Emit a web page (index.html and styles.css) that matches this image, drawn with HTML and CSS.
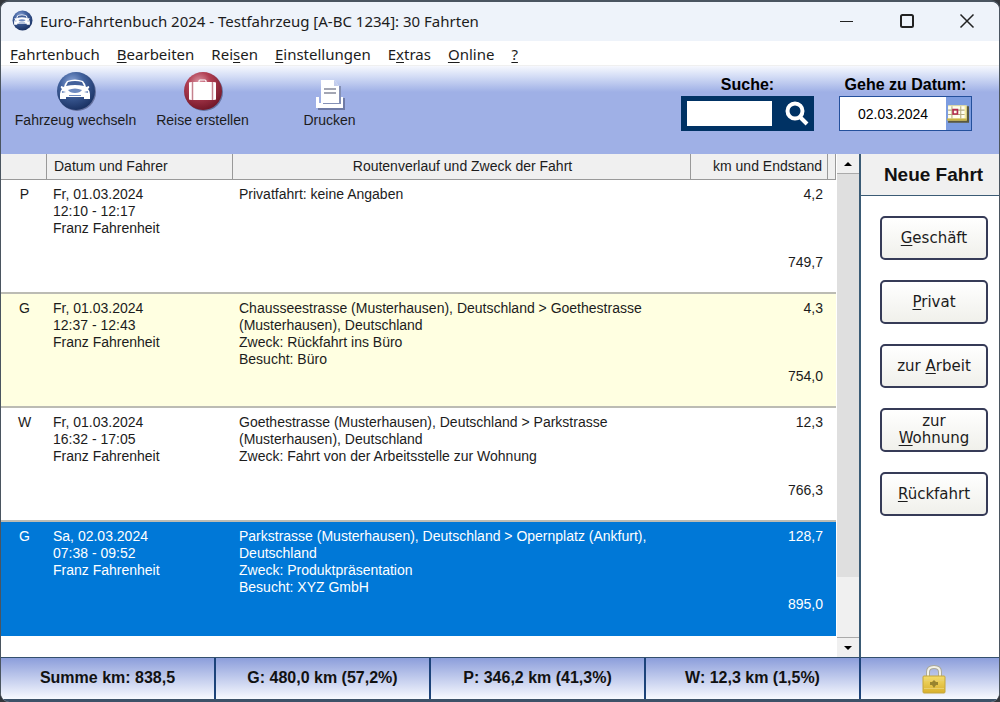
FILE: index.html
```html
<!DOCTYPE html>
<html lang="de">
<head>
<meta charset="utf-8">
<meta name="viewport" content="width=device-width, initial-scale=1">
<title>Euro-Fahrtenbuch 2024</title>
<link rel="stylesheet" href="styles.css">
</head>
<body>
<div class="window">
  <header class="titlebar">
    <svg class="app-icon" viewBox="0 0 40 40" aria-hidden="true">
      <defs>
        <radialGradient id="blue" cx="40%" cy="28%" r="75%"><stop offset="0" stop-color="#8fa9dc"/><stop offset=".4" stop-color="#43639f"/><stop offset="1" stop-color="#182f60"/></radialGradient>
        <radialGradient id="red" cx="40%" cy="28%" r="75%"><stop offset="0" stop-color="#dc9aa8"/><stop offset=".4" stop-color="#b03e52"/><stop offset="1" stop-color="#701526"/></radialGradient>
        <symbol id="car" viewBox="0 0 40 40">
          <path fill="#fff" d="M11 10q8-3 16 0 2 2 3 6l3-1q1 2-1 3 2 2 2 5v5h-6v-2H10v2H4v-5q0-3 2-5-2-1-1-3l3 1q1-4 3-6z"/>
          <path fill="#43619b" d="M12 11q7-2 14 0l2 4q-9-2-18 0z"/>
          <path fill="#6f8bc0" d="M12 19q7-3 14 0-2 3-7 3t-7-3zM6 20l4 1-4 1zM32 20l-4 1 4 1zM13 24h12v1H13z"/>
        </symbol>
      </defs>
      <circle cx="20" cy="20" r="19" fill="url(#blue)"/>
      <use href="#car" width="40" height="40"/>
    </svg>
    <h1 class="title">Euro-Fahrtenbuch 2024 - Testfahrzeug [A-BC 1234]: 30 Fahrten</h1>
    <div class="window-buttons">
      <button type="button" aria-label="Minimieren"><svg viewBox="0 0 16 16"><path d="M1 8.500h13"/></svg></button>
      <button type="button" aria-label="Maximieren"><svg viewBox="0 0 16 16"><rect class="thick" x="2" y="2" width="12" height="12" rx="1.500"/></svg></button>
      <button type="button" aria-label="Schließen"><svg viewBox="0 0 16 16"><path class="cross" d="M1.500 1.500l13 13M14.500 1.500l-13 13"/></svg></button>
    </div>
  </header>

  <nav class="menubar">
    <a href="#"><u>F</u>ahrtenbuch</a>
    <a href="#"><u>B</u>earbeiten</a>
    <a href="#">Rei<u>s</u>en</a>
    <a href="#"><u>E</u>instellungen</a>
    <a href="#">E<u>x</u>tras</a>
    <a href="#"><u>O</u>nline</a>
    <a href="#"><u>?</u></a>
  </nav>

  <div class="toolbar">
    <div class="tools">
      <button class="tool" type="button">
        <svg viewBox="0 0 40 40"><circle cx="21" cy="21" r="19" fill="#4c557f" opacity=".7"/><circle cx="20" cy="20" r="19" fill="url(#blue)"/><use href="#car" width="40" height="40"/></svg>
        Fahrzeug wechseln
      </button>
      <button class="tool" type="button">
        <svg viewBox="0 0 40 40"><circle cx="21" cy="21" r="19" fill="#4c557f" opacity=".7"/><circle cx="20" cy="20" r="19" fill="url(#red)"/><path fill="none" stroke="#fff" stroke-width="1.200" d="M16 11v-1q0-1 1-1h5q1 0 1 1v1"/><path fill="#f3dfe3" d="M7 11h25q1 0 1 1v16q0 1-1 1H7q-1 0-1-1V12q0-1 1-1z"/><path fill="#fff" d="M6 12h2v16H6zM11 11h17v18H11zM31 12h2v16h-2z"/><path stroke="#b86a78" stroke-width=".8" d="M9.500 11v18M29.500 11v18"/></svg>
        Reise erstellen
      </button>
      <button class="tool" type="button">
        <svg viewBox="0 0 40 40"><path fill="#6f7ba6" d="M8 27h27v12H8z"/><path fill="#fff" d="M6 26h27v11H6z"/><path fill="#9daee4" d="M9 26h21v6H9z"/><path fill="#8490b5" d="M29 15h2v18H13v-2z"/><path fill="#fff" d="M11 9h13l5 6v17H11z"/><path fill="#c3cdec" d="M24 9v6h5z"/><path stroke="#85899a" stroke-width="1.300" d="M14 18h12M14 22h12"/><path fill="#fff" d="M6 33h27v4H6z"/></svg>
        Drucken
      </button>
    </div>
    <div class="field search">
      <label for="suche">Suche:</label>
      <div class="search-box">
        <input id="suche" type="text">
        <button type="button" aria-label="Suchen"><svg viewBox="0 0 26 26"><circle cx="11" cy="10" r="7.500"/><path d="M16 16l7 7"/></svg></button>
      </div>
    </div>
    <div class="field date">
      <label for="datum">Gehe zu Datum:</label>
      <div class="date-box">
        <input id="datum" type="text" value="02.03.2024">
        <button type="button" aria-label="Kalender"><svg viewBox="0 0 20 18"><path fill="#59583f" d="M2 2h18v15H1v-2h1z"/><path fill="#f4e99b" d="M1 1h17v14H1z"/><path fill="#fffef0" d="M1 2h15v11H1z"/><path fill="#c9b348" d="M0 13h18v2H0z"/><path stroke="#b8ae83" fill="none" d="M4.500 2v11M12.500 2v11M1 5.500h15M1 9.500h15"/><path stroke="#b42b50" stroke-width="1.500" fill="none" d="M5.500 5h4v4h-4z"/></svg></button>
      </div>
    </div>
  </div>

  <main class="main">
    <div class="list">
      <table class="trips">
        <colgroup><col class="c-type"><col class="c-date"><col><col class="c-km"><col class="c-end"></colgroup>
        <thead>
          <tr><th></th><th>Datum und Fahrer</th><th class="center">Routenverlauf und Zweck der Fahrt</th><th class="num">km und Endstand</th><th></th></tr>
        </thead>
        <tbody>
          <tr>
            <td class="type">P</td>
            <td>Fr, 01.03.2024<br>12:10 - 12:17<br>Franz Fahrenheit</td>
            <td>Privatfahrt: keine Angaben</td>
            <td class="num">4,2<div class="total">749,7</div></td><td></td>
          </tr>
          <tr class="business">
            <td class="type">G</td>
            <td>Fr, 01.03.2024<br>12:37 - 12:43<br>Franz Fahrenheit</td>
            <td>Chausseestrasse (Musterhausen), Deutschland &gt; Goethestrasse<br>(Musterhausen), Deutschland<br>Zweck: Rückfahrt ins Büro<br>Besucht: Büro</td>
            <td class="num">4,3<div class="total">754,0</div></td><td></td>
          </tr>
          <tr>
            <td class="type">W</td>
            <td>Fr, 01.03.2024<br>16:32 - 17:05<br>Franz Fahrenheit</td>
            <td>Goethestrasse (Musterhausen), Deutschland &gt; Parkstrasse<br>(Musterhausen), Deutschland<br>Zweck: Fahrt von der Arbeitsstelle zur Wohnung</td>
            <td class="num">12,3<div class="total">766,3</div></td><td></td>
          </tr>
          <tr class="selected">
            <td class="type">G</td>
            <td>Sa, 02.03.2024<br>07:38 - 09:52<br>Franz Fahrenheit</td>
            <td>Parkstrasse (Musterhausen), Deutschland &gt; Opernplatz (Ankfurt),<br>Deutschland<br>Zweck: Produktpräsentation<br>Besucht: XYZ GmbH</td>
            <td class="num">128,7<div class="total">895,0</div></td><td></td>
          </tr>
        </tbody>
      </table>
    </div>
    <div class="scrollbar">
      <button type="button" aria-label="Nach oben"><svg viewBox="0 0 10 6"><path d="M1 5l4-4 4 4z"/></svg></button>
      <div class="track"><div class="thumb"></div></div>
      <button type="button" aria-label="Nach unten"><svg viewBox="0 0 10 6"><path d="M1 1l4 4 4-4z"/></svg></button>
    </div>
    <aside class="side">
      <h2>Neue Fahrt</h2>
      <div class="actions">
        <button type="button"><span><u>G</u>eschäft</span></button>
        <button type="button"><span><u>P</u>rivat</span></button>
        <button type="button"><span>zur <u>A</u>rbeit</span></button>
        <button type="button"><span>zur<br><u>W</u>ohnung</span></button>
        <button type="button"><span><u>R</u>ückfahrt</span></button>
      </div>
    </aside>
  </main>

  <footer class="status">
    <div class="sums">
      <div>Summe km: 838,5</div>
      <div>G: 480,0 km (57,2%)</div>
      <div>P: 346,2 km (41,3%)</div>
      <div>W: 12,3 km (1,5%)</div>
    </div>
    <div class="lock">
      <svg viewBox="0 0 24 30" role="img" aria-label="Gesperrt"><defs><linearGradient id="gold" x2="0" y2="1"><stop offset="0" stop-color="#f3dc6c"/><stop offset="1" stop-color="#d9b02c"/></linearGradient></defs><path fill="none" stroke="#aaa99a" stroke-width="4" d="M6 13V8q0-5 6-5t6 5v5"/><path fill="none" stroke="#f4f3e8" stroke-width="2" d="M6 13V8q0-5 6-5t6 5v5"/><rect x="1" y="12" width="22" height="17" rx="1" fill="url(#gold)" stroke="#c4a63c"/><path fill="none" stroke="#ead06a" d="M2 16.500h20M2 24.500h20"/><path fill="#98842f" d="M12 16l2 2h2v3h-2l-2 3-2-3H8v-3h2z"/></svg>
    </div>
  </footer>
</div>
</body>
</html>
```
FILE: styles.css
```css
* { box-sizing: border-box; }

body {
  margin: 0;
  background: #33373c;
  color: #1c1c1c;
  font: 14px/17px "Liberation Sans", Arial, sans-serif;
}

button, input { font: inherit; color: inherit; }
button { margin: 0; padding: 0; border: 0; background: none; }
svg { display: block; }

.window {
  display: flex;
  flex-direction: column;
  min-height: 100vh;
  border: 1px solid #4a5560;
  border-top-width: 2px;
  border-bottom: 0;
  border-radius: 9px;
  overflow: hidden;
  background: #fff;
}

.titlebar {
  display: flex;
  align-items: center;
  height: 39px;
  padding: 0 2px 2px 11px;
  background: #eef3fa;
}
.app-icon { width: 21px; height: 21px; }
.title {
  flex: 1;
  margin: 0 0 0 7px;
  font: 15px/20px "Noto Sans", sans-serif;
}
.window-buttons { display: flex; }
.window-buttons button { width: 60px; height: 36px; }
.window-buttons svg {
  width: 16px;
  height: 16px;
  margin: 0 auto;
  fill: none;
  stroke: #222;
}
.window-buttons .thick { stroke-width: 2; }
.window-buttons .cross { stroke-width: 1.5; }

.menubar {
  display: flex;
  gap: 17px;
  height: 25px;
  padding-left: 9px;
  border-bottom: 1px solid #f0f0f0;
  font: 15px/26px "Noto Sans", sans-serif;
}
.menubar a { color: inherit; text-decoration: none; }
u { text-underline-offset: 2px; }

.toolbar {
  display: flex;
  height: 88px;
  padding-right: 27px;
  background: linear-gradient(#f6f8fe, #d5def6 10px, #9fb0e6 26px);
}
.tools {
  display: flex;
  flex: 1;
  align-items: flex-start;
  padding: 5px 0 0 11px;
}
.tool {
  display: flex;
  flex-direction: column;
  align-items: center;
  gap: 1px;
  width: 127px;
  white-space: nowrap;
}
.tool svg { width: 40px; height: 40px; }
.field {
  display: flex;
  flex-direction: column;
  align-items: center;
  padding-top: 10px;
  color: #000;
}
.field label { margin-bottom: 3px; font-size: 16px; font-weight: bold; }
.search { width: 133px; }
.date { width: 133px; margin-left: 25px; }
.search-box, .date-box {
  display: flex;
  align-items: center;
  width: 100%;
  height: 35px;
}
.search-box { padding-left: 6px; background: #003264; }
.search-box input {
  flex: 1;
  min-width: 0;
  height: 25px;
  padding: 0 4px;
  border: 0;
}
.search-box button { width: 42px; padding-left: 8px; }
.search-box svg {
  width: 26px;
  height: 26px;
  margin: 0 auto;
  fill: none;
  stroke: #fff;
  stroke-width: 4;
}
.date-box { border: 1px solid #24509c; background: #7c9ce0; }
.date-box input {
  flex: 1;
  min-width: 0;
  height: 33px;
  padding: 0;
  border: 0;
  text-align: center;
}
.date-box button { width: 25px; padding-left: 1px; }
.date-box svg { width: 22px; height: 20px; }

.main { display: flex; flex: 1; }
.list { flex: 1; min-width: 0; padding-right: 1px; }
.trips {
  width: 100%;
  border-collapse: separate;
  border-spacing: 0;
  table-layout: fixed;
}
.c-type { width: 46px; }
.c-date { width: 186px; }
.c-km { width: 137px; }
.c-end { width: 8px; }
.trips th {
  height: 26px;
  padding: 0 5px 0 7px;
  border-right: 1px solid #999;
  border-bottom: 1px solid #999;
  background: #f0f0f0;
  font-weight: normal;
  text-align: left;
}
.trips td {
  height: 114px;
  padding: 6px 5px 21px 6px;
  border-bottom: 2px solid #bcbcb4;
  vertical-align: top;
}
.trips .center { text-align: center; }
.trips .num { text-align: right; }
.trips .type { text-align: center; }
.trips th:last-child, .trips td:last-child { padding: 0; }
.total { margin-top: 51px; }
.business td { background: #ffffe1; }
.trips .selected td {
  border-color: #0078d7;
  background: #0078d7;
  color: #fff;
}

.scrollbar {
  display: flex;
  flex-direction: column;
  width: 22px;
  background: #f0f0f0;
}
.scrollbar button { height: 20px; border-bottom: 1px solid #aaa; }
.scrollbar button:last-child { border-top: 1px solid #aaa; border-bottom: 0; }
.scrollbar svg { width: 10px; height: 6px; margin: 0 auto; }
.track { flex: 1; }
.thumb { height: 87%; background: #dfdfdf; }

.side {
  width: 140px;
  border-left: 2px solid #3b5b75;
  background: #fff;
}
.side h2 {
  margin: 0;
  padding-left: 7px;
  border-bottom: 1px solid #3b5b75;
  background: #f0f0f0;
  color: #111;
  font: bold 19px/41px "Liberation Sans", sans-serif;
  text-align: center;
}
.actions {
  display: flex;
  flex-direction: column;
  gap: 20px;
  padding: 20px 11px 0 19px;
}
.actions button {
  height: 44px;
  border: 2px solid #363b57;
  border-radius: 5px;
  background: linear-gradient(#fff, #f0f0eb);
  font: 15px/17px "DejaVu Sans", sans-serif;
}

.status {
  display: flex;
  height: 45px;
  border-top: 1px solid #34506e;
  border-bottom: 3px solid #3d5268;
  background: linear-gradient(#8c9edb, #f8faff);
  color: #111;
  font-size: 16px;
  font-weight: bold;
}
.sums { display: flex; flex: 1; }
.sums div {
  flex: 1;
  border-right: 2px solid #1c4379;
  line-height: 40px;
  text-align: center;
}
.lock {
  display: flex;
  align-items: center;
  justify-content: center;
  width: 138px;
  padding-left: 8px;
}
.lock svg { width: 24px; height: 30px; }
```
